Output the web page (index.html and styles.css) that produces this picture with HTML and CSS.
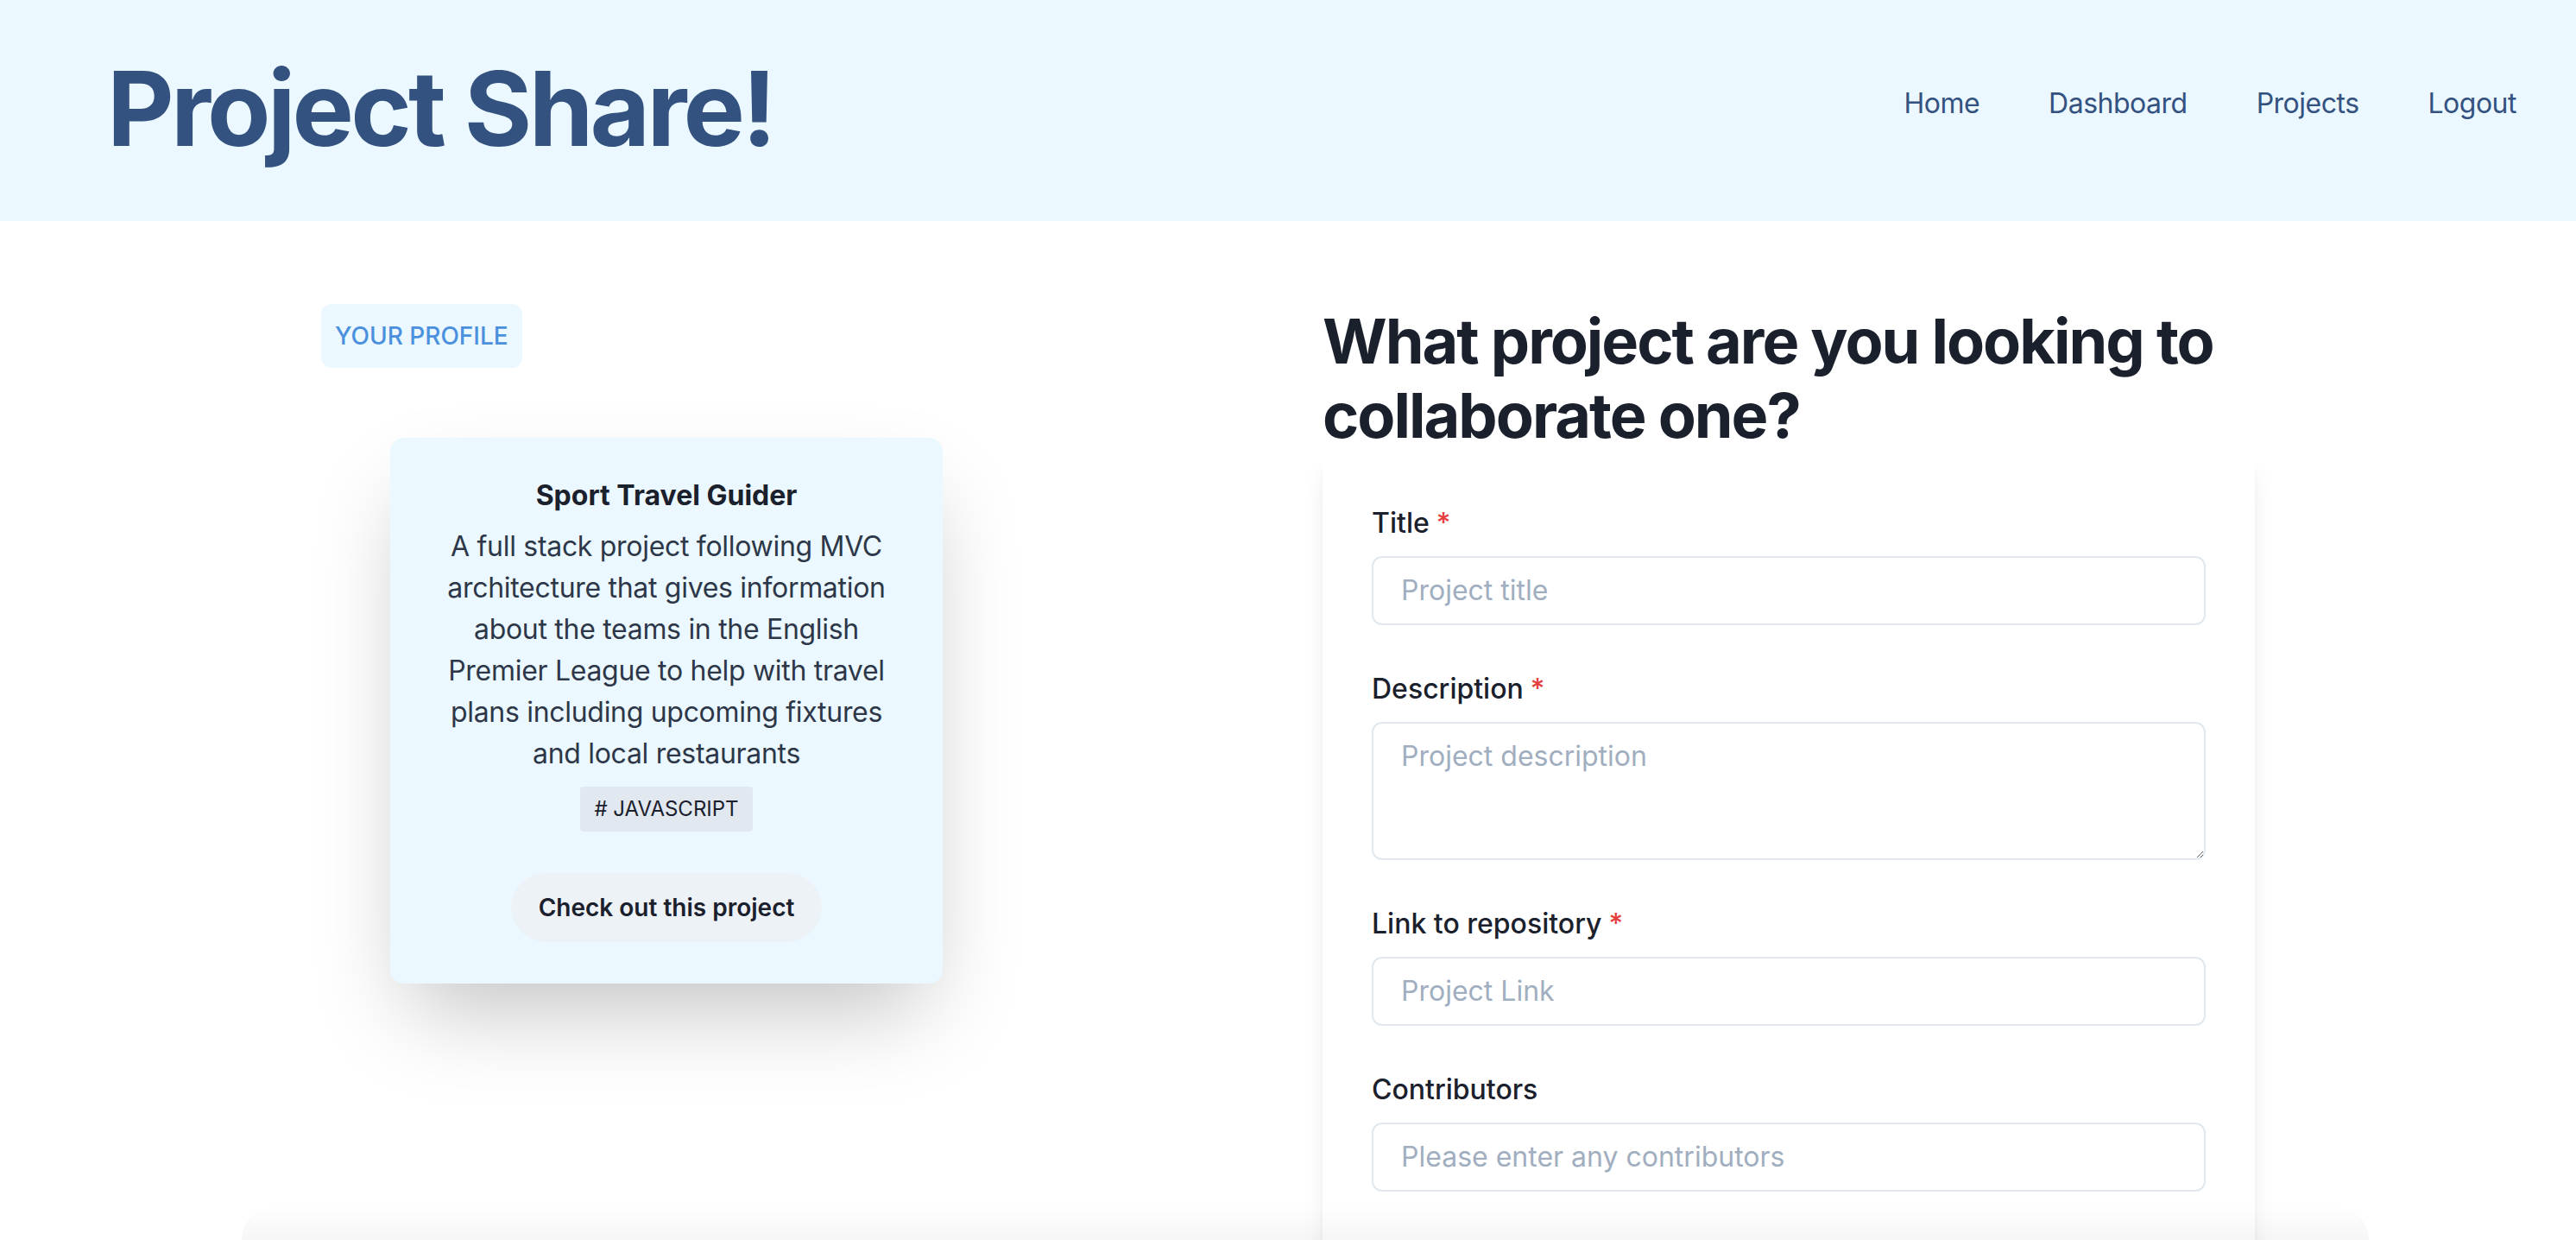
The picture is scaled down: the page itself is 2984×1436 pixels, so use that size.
FILE: index.html
```html
<!DOCTYPE html>
<html lang="en">
<head>
<meta charset="utf-8">
<title>Project Share!</title>
<link rel="stylesheet" href="styles.css">
</head>
<body>
<header class="topbar">
  <h1 class="brand">Project Share!</h1>
  <nav class="nav">
    <a href="#" class="nav-link">Home</a>
    <a href="#" class="nav-link">Dashboard</a>
    <a href="#" class="nav-link">Projects</a>
    <a href="#" class="nav-link">Logout</a>
  </nav>
</header>

<main class="content">
  <section class="profile-col">
    <div class="profile-tag">Your Profile</div>
    <article class="project-card">
      <h2 class="card-title">Sport Travel Guider</h2>
      <p class="card-desc">A full stack project following MVC architecture that gives information about the teams in the English Premier League to help with travel plans including upcoming fixtures and local restaurants</p>
      <div class="tags"><span class="tag"># JAVASCRIPT</span></div>
      <button class="card-btn" type="button">Check out this project</button>
    </article>
  </section>

  <section class="form-col">
    <h2 class="form-heading">What project are you looking to collaborate one?</h2>
    <form class="form-box">
      <div class="field">
        <label class="label" for="title">Title<span class="req">*</span></label>
        <input class="input" id="title" type="text" placeholder="Project title">
      </div>
      <div class="field">
        <label class="label" for="desc">Description<span class="req">*</span></label>
        <textarea class="textarea" id="desc" placeholder="Project description"></textarea>
      </div>
      <div class="field">
        <label class="label" for="link">Link to repository<span class="req">*</span></label>
        <input class="input" id="link" type="text" placeholder="Project Link">
      </div>
      <div class="field">
        <label class="label" for="contrib">Contributors</label>
        <input class="input" id="contrib" type="text" placeholder="Please enter any contributors">
      </div>
    </form>
  </section>
</main>
<div class="bottom-shade"></div>
</body>
</html>
```
FILE: styles.css
```css
* { box-sizing: border-box; }

body {
  margin: 0;
  font-family: Inter, "Noto Sans", "Liberation Sans", sans-serif;
  color: #1A202C;
  background: #ffffff;
  line-height: 1.5;
}

.topbar {
  height: 256px;
  background: #EBF8FF;
  display: flex;
  align-items: center;
  justify-content: space-between;
  padding: 0 69px 0 124px;
}

.brand {
  margin: 0 0 4px;
  font-size: 120px;
  line-height: 1.2;
  font-weight: 700;
  color: #34527F;
  letter-spacing: -3.8px;
}

.nav {
  display: flex;
  gap: 80px;
  margin-bottom: 16px;
}

.nav-link {
  font-size: 32px;
  color: #34527F;
  text-decoration: none;
  letter-spacing: -0.5px;
}

.content {
  width: 2240px;
  margin: 0 auto;
  padding-top: 96px;
  display: grid;
  grid-template-columns: 1080px 1080px;
  column-gap: 80px;
  align-items: start;
}

.profile-col {
  display: flex;
  flex-direction: column;
  align-items: flex-start;
}

.profile-tag {
  background: #EBF8FF;
  color: #4A90DD;
  font-size: 28px;
  font-weight: 500;
  line-height: 42px;
  text-transform: uppercase;
  padding: 16px;
  border-radius: 12px;
}

.project-card {
  margin: 81px 0 0 80px;
  width: 640px;
  padding: 48px;
  background: #EBF8FF;
  border-radius: 16px;
  text-align: center;
  box-shadow: 0 50px 100px -24px rgba(0, 0, 0, 0.25);
  display: flex;
  flex-direction: column;
  align-items: center;
}

.card-title {
  margin: 0 0 16px;
  font-size: 32px;
  line-height: 1.2;
  font-weight: 700;
  color: #1A202C;
}

.card-desc {
  margin: 0;
  font-size: 32px;
  line-height: 48px;
  color: #2D3748;
  letter-spacing: -0.3px;
}

.tags {
  margin-top: 14px;
  display: flex;
  justify-content: center;
}

.tag {
  background: #E2E8F0;
  color: #1A202C;
  font-size: 24px;
  line-height: 36px;
  padding: 8px 16px;
  border-radius: 4px;
}

.card-btn {
  margin-top: 48px;
  height: 80px;
  padding: 0 32px;
  border: none;
  border-radius: 9999px;
  background: #EDF2F7;
  color: #1A202C;
  font-family: inherit;
  font-size: 28px;
  font-weight: 600;
}

.form-heading {
  margin: 0;
  font-size: 72px;
  line-height: 1.2;
  font-weight: 700;
  color: #1A202C;
  letter-spacing: -2px;
}

.form-box {
  background: #ffffff;
  border-radius: 8px;
  padding: 57px 57px 80px;
  box-shadow: 0 20px 30px -6px rgba(0, 0, 0, 0.1), 0 8px 12px -4px rgba(0, 0, 0, 0.05);
  display: flex;
  flex-direction: column;
  gap: 50px;
}

.field {
  display: flex;
  flex-direction: column;
}

.label {
  font-size: 32px;
  font-weight: 500;
  line-height: 48px;
  margin-bottom: 14px;
  color: #1A202C;
}

.req {
  color: #E53E3E;
  margin-left: 8px;
}

.input,
.textarea {
  width: 100%;
  border: 2px solid #E2E8F0;
  border-radius: 12px;
  padding: 0 32px;
  font-family: inherit;
  font-size: 32px;
  color: #1A202C;
  background: #ffffff;
  outline: none;
}

.input {
  height: 80px;
}

.textarea {
  display: block;
  height: 160px;
  padding: 16px 32px;
  line-height: 1.375;
}

.input::placeholder,
.textarea::placeholder {
  color: #A0AEC0;
}

.bottom-shade {
  position: fixed;
  left: 280px;
  right: 240px;
  bottom: 0;
  height: 40px;
  pointer-events: none;
  background: linear-gradient(to bottom, rgba(0, 0, 0, 0), rgba(0, 0, 0, 0.035));
  border-radius: 60px 60px 0 0;
}
```
